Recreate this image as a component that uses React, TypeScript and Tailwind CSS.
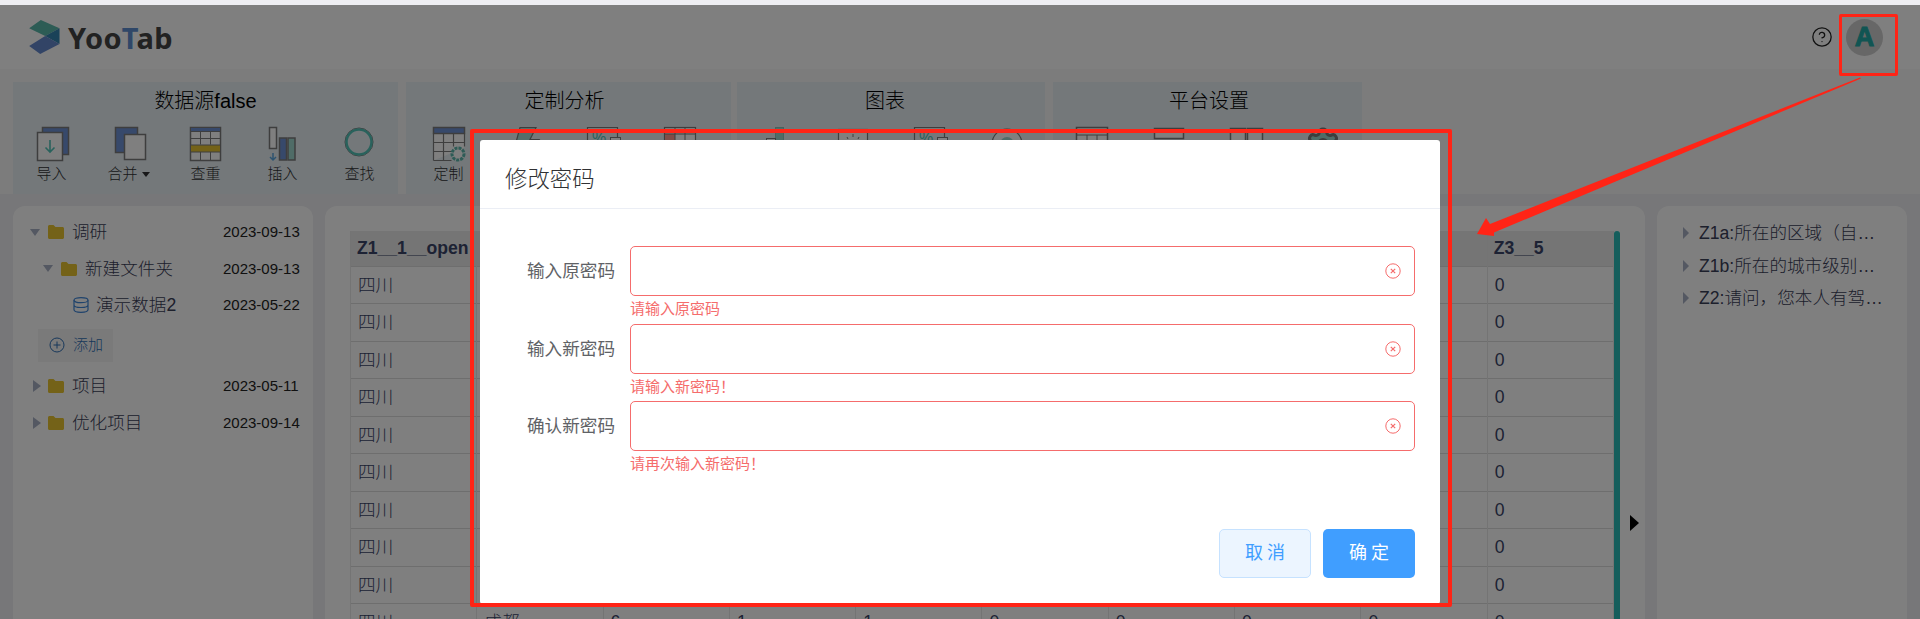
import { CircleHelp, Settings } from 'lucide-react';

const BLUE = '#6f93d6';
const TEAL = '#52c4b8';
const LINE = '#7c7c7c';

function ImportIcon() {
  return (
    <svg width="38" height="36" viewBox="0 0 38 36" fill="none">
      <rect x="9.5" y="1.5" width="26" height="27" fill={BLUE} stroke={LINE} strokeWidth="1.5" />
      <rect x="4.5" y="6.5" width="25" height="28" fill="#fff" stroke={LINE} strokeWidth="1.5" />
      <path d="M17 14v12M12.500 21.500l4.500 4.500 4.500-4.500" stroke={TEAL} strokeWidth="1.600" />
    </svg>
  );
}

function MergeIcon() {
  return (
    <svg width="38" height="36" viewBox="0 0 38 36" fill="none">
      <rect x="5.500" y="1.500" width="22" height="25" fill={BLUE} stroke={LINE} strokeWidth="1.500" />
      <rect x="14.500" y="8.500" width="21" height="25" fill="#fff" stroke={LINE} strokeWidth="1.500" />
    </svg>
  );
}

function DedupeIcon() {
  return (
    <svg width="38" height="36" viewBox="0 0 38 36" fill="none">
      <rect x="3.500" y="1.500" width="30" height="33" fill="#fff" stroke={LINE} strokeWidth="1.500" />
      <rect x="3.500" y="1.500" width="30" height="4" fill={BLUE} stroke={LINE} strokeWidth="1" />
      <rect x="3.500" y="19" width="30" height="7" fill="#e8c530" stroke={LINE} strokeWidth="1" />
      <path d="M3.500 12.500h30M13.500 5.500v13M23.500 5.500v13M13.500 26v8.500M23.500 26v8.500" stroke={LINE} />
    </svg>
  );
}

function InsertIcon() {
  return (
    <svg width="38" height="36" viewBox="0 0 38 36" fill="none">
      <rect x="5.500" y="1.500" width="7" height="21" fill="#fff" stroke={LINE} strokeWidth="1.500" />
      <rect x="15.500" y="12" width="7" height="22" fill={BLUE} stroke={LINE} strokeWidth="1.500" />
      <rect x="24" y="12" width="7" height="22" fill="#9fd8cf" stroke={LINE} strokeWidth="1.500" />
      <path d="M9 27v7M6 31l3 3 3-3" stroke="#5ba7e0" strokeWidth="1.500" />
    </svg>
  );
}

function FindIcon() {
  return (
    <svg width="38" height="36" viewBox="0 0 38 36" fill="none">
      <circle cx="18" cy="16" r="14" stroke={LINE} strokeWidth="1" />
      <circle cx="18" cy="16" r="12.500" stroke={TEAL} strokeWidth="2.500" />
    </svg>
  );
}

function TableGearIcon() {
  return (
    <svg width="38" height="36" viewBox="0 0 38 36" fill="none">
      <path d="M3.500 34.500V1.500h31v20" fill="#fff" />
      <rect x="3.500" y="1.500" width="31" height="6" fill={BLUE} stroke={LINE} strokeWidth="1.500" />
      <path d="M3.500 34.500V7.500M34.500 7.500v13M3.500 16.500h31M3.500 25.500h20M3.500 34.500h18M13.500 7.500v27M23.500 7.500v13" stroke={LINE} strokeWidth="1.200" />
      <circle cx="28" cy="28" r="6" fill="#fff" stroke="#5db7ac" strokeWidth="3" strokeDasharray="3 1" />
    </svg>
  );
}

function BoltIcon() {
  return (
    <svg width="38" height="36" viewBox="0 0 38 36" fill="none">
      <path d="M13 1.500h16l-6 12h9L12 34l5-14H8z" fill="#a8dcd4" stroke={LINE} strokeWidth="1.200" />
    </svg>
  );
}

function PercentIcon() {
  return (
    <svg width="38" height="36" viewBox="0 0 38 36" fill="none">
      <path d="M3.500 30V1.500h30V12" stroke={LINE} strokeWidth="1.200" />
      <text x="8" y="17" fontSize="16" fill={TEAL} fontFamily="Liberation Sans">%</text>
      <rect x="26.500" y="11.500" width="10" height="8" fill="#fff" stroke={LINE} />
    </svg>
  );
}

function HeatTableIcon() {
  return (
    <svg width="38" height="36" viewBox="0 0 38 36" fill="none">
      <rect x="3.500" y="1.500" width="31" height="32" fill="#fff" stroke={LINE} strokeWidth="1.200" />
      <rect x="4" y="8" width="10" height="8" fill="#ff9a90" />
      <path d="M3.500 8h31M14 2v32M24 2v32" stroke={LINE} />
    </svg>
  );
}

function BarsIcon() {
  return (
    <svg width="38" height="36" viewBox="0 0 38 36" fill="none">
      <rect x="18.500" y="1.500" width="8" height="32" fill="#9fd8cf" stroke="#8cc5bd" />
      <rect x="9.500" y="12.500" width="9" height="21" fill="#fff" stroke={LINE} />
    </svg>
  );
}

function DotsIcon() {
  return (
    <svg width="38" height="36" viewBox="0 0 38 36" fill="none">
      <rect x="4.500" y="3.500" width="29" height="30" fill="#fff" stroke={LINE} strokeWidth="1.200" />
      <path d="M19 8v3M13 11l1 2M25 11l-1 2" stroke={LINE} />
    </svg>
  );
}

function TargetIcon() {
  return (
    <svg width="38" height="36" viewBox="0 0 38 36" fill="none">
      <circle cx="19" cy="18" r="15" fill="#fff" stroke={LINE} strokeWidth="1.200" />
      <circle cx="19" cy="18" r="7" fill="#9fd8cf" />
    </svg>
  );
}

function GridIcon() {
  return (
    <svg width="38" height="36" viewBox="0 0 38 36" fill="none">
      <rect x="3.500" y="1.500" width="31" height="32" fill="#fff" stroke={LINE} strokeWidth="1.500" />
      <path d="M3.500 9h31M14 9v25M24 9v25" stroke={LINE} />
    </svg>
  );
}

function RowsIcon() {
  return (
    <svg width="38" height="36" viewBox="0 0 38 36" fill="none">
      <rect x="4.500" y="2.500" width="29" height="10" fill="#fff" stroke={LINE} strokeWidth="1.500" />
      <rect x="4.500" y="15.500" width="29" height="10" fill="#fff" stroke={LINE} strokeWidth="1.500" />
    </svg>
  );
}

function ColsIcon() {
  return (
    <svg width="38" height="36" viewBox="0 0 38 36" fill="none">
      <rect x="3.500" y="2.500" width="15" height="30" fill="#fff" stroke={LINE} strokeWidth="1.500" />
      <rect x="20.500" y="2.500" width="15" height="30" fill="#fff" stroke={LINE} strokeWidth="1.500" />
    </svg>
  );
}

function GearIcon() {
  return <Settings size={36} strokeWidth={2} color="#7c7c7c" fill="#9fd8cf" />;
}

const groups = [
  {
    title: '数据源false',
    className: 'w-[385px] mr-[8px]',
    titleClass: '',
    items: [
      { label: '导入', icon: <ImportIcon /> },
      { label: '合并', caret: true, icon: <MergeIcon /> },
      { label: '查重', icon: <DedupeIcon /> },
      { label: '插入', icon: <InsertIcon /> },
      { label: '查找', icon: <FindIcon /> },
    ],
  },
  {
    title: '定制分析',
    className: 'w-[325px] pl-[4px] mr-[6px]',
    titleClass: 'pr-[12px]',
    items: [
      { label: '定制', icon: <TableGearIcon /> },
      { label: '对比', icon: <BoltIcon /> },
      { label: '占比', icon: <PercentIcon /> },
      { label: '交叉', icon: <HeatTableIcon /> },
    ],
  },
  {
    title: '图表',
    className: 'w-[308px] mr-[8px]',
    titleClass: 'pr-[12px]',
    items: [
      { label: '柱图', icon: <BarsIcon /> },
      { label: '散点', icon: <DotsIcon /> },
      { label: '占比', icon: <PercentIcon /> },
      { label: '饼图', icon: <TargetIcon /> },
    ],
  },
  {
    title: '平台设置',
    className: 'w-[309px]',
    titleClass: 'pl-[3px]',
    items: [
      { label: '表格', icon: <GridIcon /> },
      { label: '行', icon: <RowsIcon /> },
      { label: '列', icon: <ColsIcon /> },
      { label: '设置', icon: <GearIcon /> },
    ],
  },
];

const tree = [
  { name: '调研', date: '2023-09-13', indent: 'pl-[17px]', open: true, kind: 'folder' },
  { name: '新建文件夹', date: '2023-09-13', indent: 'pl-[30px]', open: true, kind: 'folder' },
  { name: '演示数据2', date: '2023-05-22', indent: 'pl-[60px]', kind: 'data' },
  { kind: 'add' },
  { name: '项目', date: '2023-05-11', indent: 'pl-[17px] mb-[1px]', open: false, kind: 'folder' },
  { name: '优化项目', date: '2023-09-14', indent: 'pl-[17px]', open: false, kind: 'folder' },
];

const columns = ['Z1__1__open', 'Z1__2', 'Z2', 'Z3__1', 'Z3__2', 'Z3__3', 'Z3__4', 'Z3__6', '', 'Z3__5'];
const row = ['四川', '成都', '6', '1', '1', '0', '0', '0', '0', '0'];
const rows = Array.from({ length: 10 }, (_, i) => i);

const fields = [
  { label: '输入原密码', error: '请输入原密码' },
  { label: '输入新密码', error: '请输入新密码！' },
  { label: '确认新密码', error: '请再次输入新密码！' },
];

function Logo() {
  return (
    <div className="flex items-center gap-[8px]">
      <svg width="31" height="34" viewBox="87 60 92 102">
        <path d="M87 85 122 60l56 25-43 23z" fill="#5bb8aa" />
        <path d="M135 108l43-23v47z" fill="#3584b0" />
        <path d="M87 138l48-30 43 24-58 30z" fill="#6488cc" />
      </svg>
      <span className="font-['Noto_Sans'] text-[29px] leading-none font-bold tracking-[0.3px] text-[#444]">
        Yoo<span className="text-[#5f8fd0]">T</span>ab
      </span>
    </div>
  );
}

function ErrorIcon() {
  return (
    <svg width="16" height="16" viewBox="0 0 16 16" fill="none" className="absolute top-[17px] right-[14px]">
      <circle cx="8" cy="8" r="7.200" stroke="#f56c6c" strokeWidth="1" />
      <path d="M5.800 5.800l4.400 4.400M10.200 5.800l-4.400 4.400" stroke="#f56c6c" strokeWidth="1.200" />
    </svg>
  );
}

export default function App() {
  return (
    <div className="relative flex h-[619px] w-[1920px] flex-col overflow-hidden bg-[#eeeef2] pt-[5px] font-['Liberation_Sans','Noto_Sans_CJK_SC',sans-serif] text-[#303133]">
      {/* top bar */}
      <header className="flex h-[64px] shrink-0 items-center justify-between bg-white pr-[37px] pl-[29px]">
        <Logo />
        <div className="flex items-center gap-[13px]">
          <CircleHelp size={22} strokeWidth={1.4} color="#222" />
          <div className="flex h-[37px] w-[37px] items-center justify-center rounded-full bg-[#cfcfcf] text-[27px] font-bold text-[#22aaa6] [-webkit-text-stroke:1px_#22aaa6]">
            A
          </div>
        </div>
      </header>

      {/* ribbon */}
      <div className="flex h-[125px] shrink-0 bg-[#f8f8f8] pt-[13px] pl-[13px]">
        {groups.map((group) => (
          <section key={group.title} className={`h-[112px] bg-[#e8f1f5] ${group.className}`}>
            <h2 className={`mt-[7px] text-center text-[20px] leading-[24px] font-light text-black ${group.titleClass}`}>{group.title}</h2>
            <div className="mt-[13px] flex">
              {group.items.map((item, i) => (
                <button key={i} className="flex w-[77px] flex-col items-center">
                  {item.icon}
                  <span className="mt-[2px] flex items-center gap-[4px] text-[15px] leading-[20px] font-light text-[#303133]">
                    {item.label}
                    {'caret' in item && <span className="border-x-[4px] border-t-[5px] border-x-transparent border-t-[#303133]" />}
                  </span>
                </button>
              ))}
            </div>
          </section>
        ))}
      </div>

      {/* panels */}
      <div className="flex min-h-0 flex-1 gap-[12px] pt-[12px] pl-[13px]">
        <aside className="w-[300px] shrink-0 rounded-t-[12px] bg-white pt-[8px] pr-[13px]">
          {tree.map((node, i) =>
            node.kind === 'add' ? (
              <div key={i} className="mt-[5px] mb-[6px] ml-[25px] flex h-[33px] w-[75px] items-center gap-[8px] bg-[#f5f5f5] pl-[11px] text-[15px] font-light text-[#2f6fb5]">
                <svg width="16" height="16" viewBox="0 0 16 16" fill="none" stroke="#2f6fb5">
                  <circle cx="8" cy="8" r="7" />
                  <path d="M8 4.500v7M4.500 8h7" />
                </svg>
                添加
              </div>
            ) : (
              <div key={i} className={`flex h-[36.500px] items-center ${node.indent}`}>
                {node.kind === 'folder' ? (
                  <>
                    {node.open ? (
                      <span className="mr-[8px] border-x-[5.500px] border-t-[7px] border-x-transparent border-t-[#a8b0c4]" />
                    ) : (
                      <span className="mr-[8px] ml-[3px] border-y-[6px] border-l-[8px] border-y-transparent border-l-[#a8b0c4]" />
                    )}
                    <svg width="16" height="14" viewBox="0 0 16 14" className={node.open ? 'mr-[8px]' : 'mr-[8px] -ml-[1px]'}>
                      <path d="M0 1.500C0 .7.700 0 1.500 0h4L7.500 2h7c.8 0 1.500.7 1.500 1.500v9c0 .8-.7 1.500-1.500 1.500h-13C.7 14 0 13.300 0 12.500z" fill="#e8c530" />
                    </svg>
                  </>
                ) : (
                  <svg width="16" height="16" viewBox="0 0 16 16" fill="none" stroke="#3f86d8" strokeWidth="1.200" className="mr-[7px]">
                    <ellipse cx="8" cy="3.200" rx="7" ry="2.500" />
                    <path d="M1 3.200v9.600C1 14.200 4.100 15.300 8 15.300s7-1.100 7-2.500V3.200M1 8c0 1.400 3.100 2.500 7 2.500s7-1.100 7-2.500" />
                  </svg>
                )}
                <span className="text-[17.600px] font-light text-[#3a4058]">{node.name}</span>
                <span className="ml-auto w-[77px] text-[15px] text-[#222]">{node.date}</span>
              </div>
            ),
          )}
        </aside>

        <main className="relative w-[1320px] shrink-0 rounded-t-[12px] bg-white pt-[25px] pl-[25px]">
          <table className="w-[1264px] table-fixed border-collapse text-left text-[17.600px] text-[#3a4468]">
            <thead>
              <tr className="h-[35px] bg-[#ebebeb]">
                {columns.map((col, i) => (
                  <th key={i} className="overflow-hidden border-x border-[#e8e8e8] pl-[6px] font-bold whitespace-nowrap">{col}</th>
                ))}
              </tr>
            </thead>
            <tbody>
              {rows.map((r) => (
                <tr key={r} className="h-[37.500px] border-t border-[#dcdcdc]">
                  {row.map((cell, i) => (
                    <td key={i} className="border-x border-[#e8e8e8] pl-[7px] font-light">{cell}</td>
                  ))}
                </tr>
              ))}
            </tbody>
          </table>
          <div className="absolute top-[25px] left-[1289px] h-[500px] w-[6px] rounded-t-[3px] bg-[#2bbcb8]" />
        </main>

        <aside className="w-[250px] shrink-0 rounded-t-[12px] bg-white pt-[11px] pl-[26px]">
          {['Z1a:所在的区域（自治区）', 'Z1b:所在的城市级别情况', 'Z2:请问，您本人有驾照吗'].map((text) => (
            <div key={text} className="flex h-[32.500px] items-center gap-[10px] text-[17.600px] font-light text-[#3a4058]">
              <span className="border-y-[6px] border-l-[6px] border-y-transparent border-l-[#a8b0c4]" />
              <span className="w-[186px] truncate">{text}</span>
            </div>
          ))}
        </aside>
      </div>

      {/* modal mask */}
      <div className="absolute inset-x-0 top-[5px] bottom-0 bg-black/50" />

      <div className="absolute top-[515px] left-[1630px] border-y-[8.500px] border-l-[9px] border-y-transparent border-l-black" />

      <div className="absolute top-[140px] left-[480px] flex h-[464px] w-[960px] flex-col rounded-[3px] bg-white">
        <div className="flex h-[69px] shrink-0 items-center border-b border-[#ebeef5] pt-[11px] pl-[25px] text-[22.400px] font-light text-[#303133]">修改密码</div>
        <form className="flex flex-1 flex-col pt-[37px] pr-[25px]">
          {fields.map((field) => (
            <div key={field.label} className="flex h-[77.500px]">
              <label className="h-[50px] w-[150px] shrink-0 pr-[15px] text-right text-[17.600px] leading-[50px] text-[#606266]">{field.label}</label>
              <div className="flex-1">
                <div className="relative">
                  <input type="password" className="block h-[50px] w-full rounded-[5px] border border-[#f56c6c] bg-white outline-none" />
                  <ErrorIcon />
                </div>
                <p className="h-[27px] text-[15px] leading-[26px] text-[#f56c6c]">{field.error}</p>
              </div>
            </div>
          ))}
          <div className="mt-auto flex justify-end gap-[12px] pb-[26px]">
            <button type="button" className="h-[49px] w-[92px] rounded-[5px] border border-[#c6e2ff] bg-[#ecf5ff] pl-[4px] text-[18px] tracking-[4px] text-[#409eff]">取消</button>
            <button type="button" className="h-[49px] w-[92px] rounded-[5px] bg-[#409eff] pl-[4px] text-[18px] tracking-[4px] text-white">确定</button>
          </div>
        </form>
      </div>

      {/* red annotations */}
      <div className="absolute top-[129px] left-[470px] h-[478px] w-[982px] rounded-[2px] border-4 border-[#ff2416]" />
      <div className="absolute top-[14px] left-[1839px] h-[62px] w-[59px] rounded-[2px] border-[3px] border-[#ff2416]" />
      <svg width="1920" height="619" className="pointer-events-none absolute top-0 left-0">
        <polygon points="1477,234 1486,218 1490,224 1860,77.500 1861,78.500 1494,232.500 1494,236" fill="#ff2416" />
      </svg>
    </div>
  );
}
